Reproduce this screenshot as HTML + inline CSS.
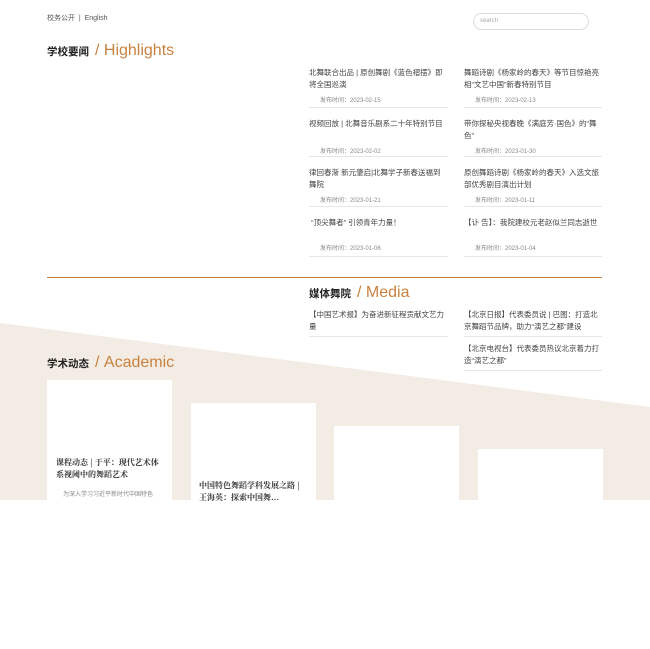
<!DOCTYPE html>
<html><head><meta charset="utf-8"><style>
*{margin:0;padding:0;box-sizing:border-box}
body{width:650px;height:500px;overflow:hidden;position:relative;background:#fff;font-family:"Liberation Sans","Noto Sans CJK SC",sans-serif;color:#333}
.a{position:absolute}
.t{font-size:7.5px;line-height:12px;color:#444}
.d{font-size:6px;color:#888;padding-left:11px}
.b{border-bottom:1px solid #e6e6e6}
.h{font-size:10.5px;font-weight:bold;color:#222}
.h span{font-size:16px;font-weight:normal;color:#c8823f;margin-left:6px}
.card{position:absolute;background:#fff;width:125px;height:200px}
.ct{font-family:"Noto Serif CJK SC",serif;font-size:8px;font-weight:bold;line-height:12px;color:#333}
</style></head><body>
<svg class="a" style="left:0;top:0" width="650" height="500"><polygon points="0,323 650,407 650,500 0,500" fill="#f3ece5"/></svg>
<div class="a" style="left:47px;top:13px;font-size:7px;color:#555">校务公开 &nbsp;|&nbsp; English</div>
<div class="a" style="left:473px;top:13px;width:116px;height:17px;border:1px solid #ddd;border-radius:9px;font-size:6px;color:#aaa;padding:4px 6px">search</div>
<div class="a h" style="left:47px;top:42px">学校要闻<span>/ Highlights</span></div>

<div class="a b" style="left:309px;top:67px;width:139px;height:41px"><div class="t">北舞联合出品 | 原创舞剧《蓝色褶摆》即将全国巡演</div><div class="d" style="margin-top:4px">发布时间：2023-02-15</div></div>
<div class="a b" style="left:464px;top:67px;width:138px;height:41px"><div class="t">舞蹈诗剧《杨家岭的春天》等节目惊艳亮相“文艺中国”新春特别节目</div><div class="d" style="margin-top:4px">发布时间：2023-02-13</div></div>
<div class="a b" style="left:309px;top:118px;width:139px;height:39px"><div class="t">视频回放 | 北舞音乐剧系二十年特别节目</div><div class="d" style="margin-top:16px">发布时间：2023-02-02</div></div>
<div class="a b" style="left:464px;top:118px;width:138px;height:39px"><div class="t">带你探秘央视春晚《满庭芳·国色》的“舞色”</div><div class="d" style="margin-top:4px">发布时间：2023-01-30</div></div>
<div class="a b" style="left:309px;top:167px;width:139px;height:40px"><div class="t">律回春渐 新元肇启|北舞学子新春送福到舞院</div><div class="d" style="margin-top:4px">发布时间：2023-01-21</div></div>
<div class="a b" style="left:464px;top:167px;width:138px;height:40px"><div class="t">原创舞蹈诗剧《杨家岭的春天》入选文旅部优秀剧目演出计划</div><div class="d" style="margin-top:4px">发布时间：2023-01-11</div></div>
<div class="a b" style="left:309px;top:217px;width:139px;height:40px"><div class="t">&nbsp;“顶尖舞者” 引领青年力量！</div><div class="d" style="margin-top:14px">发布时间：2023-01-06</div></div>
<div class="a b" style="left:464px;top:217px;width:138px;height:40px"><div class="t">【讣 告】：我院建校元老赵似兰同志逝世</div><div class="d" style="margin-top:14px">发布时间：2023-01-04</div></div>

<div class="a" style="left:47px;top:277px;width:555px;height:1px;background:#c8823f"></div>
<div class="a h" style="left:309px;top:284px">媒体舞院<span>/ Media</span></div>
<div class="a b" style="left:309px;top:309px;width:139px;height:28px"><div class="t">【中国艺术报】为奋进新征程贡献文艺力量</div></div>
<div class="a b" style="left:464px;top:309px;width:138px;height:28px"><div class="t">【北京日报】代表委员说 | 巴图：打造北京舞蹈节品牌，助力“演艺之都”建设</div></div>
<div class="a b" style="left:464px;top:343px;width:138px;height:28px"><div class="t">【北京电视台】代表委员热议北京着力打造“演艺之都”</div></div>

<div class="a h" style="left:47px;top:354px">学术动态<span>/ Academic</span></div>
<div class="card" style="left:47px;top:380px"><div class="ct" style="margin:77px 8px 0 9px">课程动态 | 于平：现代艺术体系视阈中的舞蹈艺术</div><div style="font-size:6px;color:#888;margin:8px 0 0 16px">为深入学习习近平新时代中国特色</div></div>
<div class="card" style="left:191px;top:403px"><div class="ct" style="margin:77px 8px 0 8px">中国特色舞蹈学科发展之路 | 王海英：探索中国舞...</div></div>
<div class="card" style="left:334px;top:426px"></div>
<div class="card" style="left:478px;top:449px"></div>
</body></html>
